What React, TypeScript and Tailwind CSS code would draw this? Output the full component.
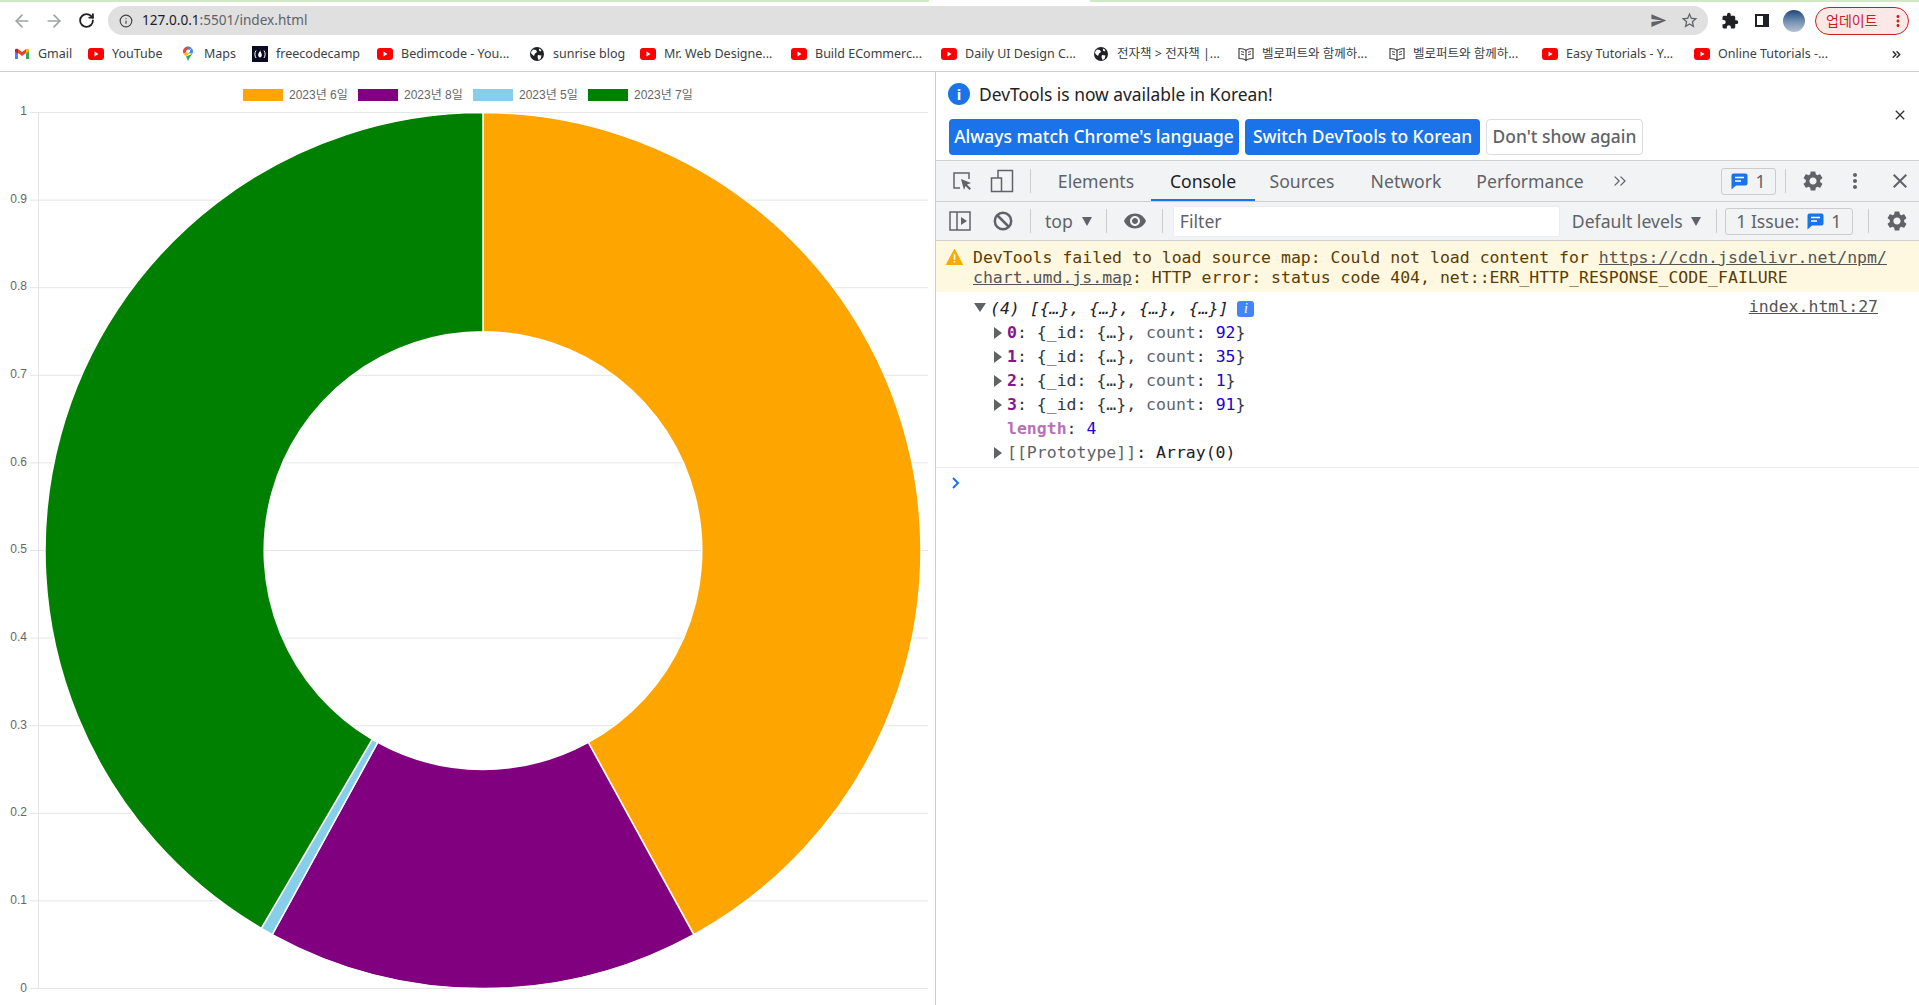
import React from "react";
import { ArrowLeft, ArrowRight, RotateCw, Info, ChevronsRight } from "lucide-react";
import { MdExtension, MdSend, MdStarBorder, MdSettings, MdMoreVert, MdClose, MdRemoveRedEye } from "react-icons/md";

const slices = [
  { count: 92, color: "#ffa500" },
  { count: 35, color: "#800080" },
  { count: 1, color: "#87ceeb" },
  { count: 91, color: "#008000" },
];

const legend = [
  { x: 243, color: "#ffa500", label: "2023년 6일" },
  { x: 358, color: "#800080", label: "2023년 8일" },
  { x: 473, color: "#87ceeb", label: "2023년 5일" },
  { x: 588, color: "#008000", label: "2023년 7일" },
];

const ticks = ["1", "0.9", "0.8", "0.7", "0.6", "0.5", "0.4", "0.3", "0.2", "0.1", "0"];

function slicePath(a0: number, a1: number) {
  const cx = 483;
  const cy = 478.6;
  const R = 438;
  const r = 218.8;
  const p = (rad: number, a: number) => `${cx + rad * Math.sin(a)} ${cy - rad * Math.cos(a)}`;
  const large = a1 - a0 > Math.PI ? 1 : 0;
  return `M${p(R, a0)} A${R} ${R} 0 ${large} 1 ${p(R, a1)} L${p(r, a1)} A${r} ${r} 0 ${large} 0 ${p(r, a0)} Z`;
}

function Chart() {
  const total = 219;
  let angle = 0;
  return (
    <svg width="935" height="933" className="block shrink-0 font-['Liberation_Sans','Noto_Sans_CJK_KR',sans-serif]">
      {legend.map((l) => (
        <g key={l.label}>
          <rect x={l.x} y="17" width="40" height="12" fill={l.color} />
          <text x={l.x + 46} y="27" fontSize="12" fill="#666">{l.label}</text>
        </g>
      ))}
      {ticks.map((t, i) => (
        <g key={t}>
          <line x1="30" x2="928" y1={40.5 + i * 87.6} y2={40.5 + i * 87.6} stroke="#e5e5e5" />
          <text x="27" y={43 + i * 87.65} fontSize="12" fill="#666" textAnchor="end">{t}</text>
        </g>
      ))}
      <line x1="38.5" x2="38.5" y1="40" y2="917" stroke="#e5e5e5" />
      {slices.map((s) => {
        const a0 = angle;
        angle += (s.count / total) * Math.PI * 2;
        return <path key={s.color} d={slicePath(a0, angle)} fill={s.color} stroke="#fff" strokeWidth="1.5" />;
      })}
    </svg>
  );
}

function YouTubeIcon() {
  return (
    <svg width="16" height="16" viewBox="0 0 16 16" className="shrink-0">
      <rect y="2" width="16" height="12" rx="3" fill="#f00" />
      <path d="M6.5 5.5v5l4-2.500z" fill="#fff" />
    </svg>
  );
}

function GmailIcon() {
  return (
    <svg width="16" height="16" viewBox="0 0 16 16" className="shrink-0">
      <path d="M1 4v9h3V7z" fill="#4285f4" />
      <path d="M15 4v9h-3V7z" fill="#34a853" />
      <path d="M12 3v4.500l3-2.200V4c0-1.200-1.500-1.800-3-1z" fill="#fbbc04" />
      <path d="M4 3v4l4 3 4-3V3L8 6z" fill="#ea4335" />
      <path d="M1 4v1.500l3 2.200V3C2.500 2.200 1 2.800 1 4z" fill="#c5221f" />
    </svg>
  );
}

function MapsIcon() {
  return (
    <svg width="16" height="16" viewBox="0 0 16 16" className="shrink-0">
      <path d="M8 0.500C5.200 0.500 3 2.700 3 5.300c0 1 .3 1.800.8 2.600L8 4.500z" fill="#ea4335" />
      <path d="M8 0.500c1.500 0 2.900.7 3.800 1.700L8 5z" fill="#4285f4" />
      <path d="M11.800 2.200C12.600 3 13 4.100 13 5.300c0 .9-.3 1.700-.7 2.400L8 7z" fill="#4285f4" />
      <path d="M3.800 7.900L8 4.500l1.500 2.800L6 10.500z" fill="#fbbc04" />
      <path d="M6 10.500L12.300 7.700C11 10 8.800 12 8 15.500 7.600 13.500 6.800 12 6 10.500z" fill="#34a853" />
      <circle cx="8" cy="5.300" r="1.800" fill="#fff" />
    </svg>
  );
}

function FreeCodeCampIcon() {
  return (
    <svg width="16" height="16" viewBox="0 0 16 16" className="shrink-0">
      <rect width="16" height="16" fill="#0a0a23" />
      <path d="M4 4.500C2.500 7 2.500 9.500 4 12M12 4.500c1.500 2.500 1.500 5 0 7.500" stroke="#fff" strokeWidth="1" fill="none" />
      <path d="M8 3.500c.8 2-1.800 3-1.800 5.500 0 1.500 1 2.500 1.800 2.500s1.800-1 1.800-2.500C9.800 7.500 8.500 6 8 3.500z" fill="#fff" />
    </svg>
  );
}

function GlobeIcon() {
  return (
    <svg width="16" height="16" viewBox="0 0 16 16" className="shrink-0">
      <circle cx="8" cy="8" r="7" fill="#202124" />
      <path d="M4 3.500l3 .5 1 2-2 1.500-1 2.500-2.500-2L2 6zM10 2.500l2.500 1.500-1 1.500-1.500-1zM9 9l3.500.5-1 3.500-2 1-1-3z" fill="#fff" />
    </svg>
  );
}

function BookIcon() {
  return (
    <svg width="16" height="16" viewBox="0 0 16 16" fill="none" stroke="#444" strokeWidth="1.200" className="shrink-0">
      <path d="M8 4.500C6.500 3 3.500 2.500 1 2.500v10c2.500 0 5.500.5 7 2 1.500-1.500 4.500-2 7-2v-10c-2.500 0-5.500.5-7 2zM8 4.500v10" />
      <path d="M3 5.500l3 .8M3 8l3 .8M10 6.300l3-.8M10 8.800l3-.8" strokeWidth="1" />
    </svg>
  );
}

const bookmarks = [
  { icon: <GmailIcon />, label: "Gmail", w: "w-[34px]" },
  { icon: <YouTubeIcon />, label: "YouTube", w: "w-[52px]" },
  { icon: <MapsIcon />, label: "Maps", w: "w-[32px]" },
  { icon: <FreeCodeCampIcon />, label: "freecodecamp", w: "w-[85px]" },
  { icon: <YouTubeIcon />, label: "Bedimcode - You...", w: "w-[112px]" },
  { icon: <GlobeIcon />, label: "sunrise blog", w: "w-[71px]" },
  { icon: <YouTubeIcon />, label: "Mr. Web Designe...", w: "w-[111px]" },
  { icon: <YouTubeIcon />, label: "Build ECommerc...", w: "w-[110px]" },
  { icon: <YouTubeIcon />, label: "Daily UI Design C...", w: "w-[112px]" },
  { icon: <GlobeIcon />, label: "전자책 > 전자책 |...", w: "w-[105px]" },
  { icon: <BookIcon />, label: "벨로퍼트와 함께하...", w: "w-[111px]" },
  { icon: <BookIcon />, label: "벨로퍼트와 함께하...", w: "w-[113px]" },
  { icon: <YouTubeIcon />, label: "Easy Tutorials - Y...", w: "w-[112px]" },
  { icon: <YouTubeIcon />, label: "Online Tutorials -...", w: "w-[113px]" },
];

function BrowserChrome() {
  return (
    <div className="shrink-0 border-b border-[#cfcfcf]">
      <div className="flex h-[2px]">
        <div className="w-[929px] bg-[#cfe9c5]" />
        <div className="w-[161px]" />
        <div className="flex-1 bg-[#cfe9c5]" />
      </div>
      <div className="flex h-[37px] items-center">
        <ArrowLeft size={20} className="ml-[12px] text-[#a0a3a6]" />
        <ArrowRight size={20} className="ml-[12px] text-[#a0a3a6]" />
        <RotateCw size={17} strokeWidth={2.6} className="ml-[14px] text-[#202124]" />
        <div className="ml-[13px] flex h-[29px] w-[1600px] items-center rounded-full bg-[#e0e0e0]">
          <Info size={14} className="ml-[11px] text-[#444]" />
          <span className="ml-[9px] text-[13.600px] text-[#5f6368]"><span className="text-[#202124]">127.0.0.1</span>:5501/index.html</span>
          <MdSend size={17} className="ml-auto text-[#5f6368]" />
          <MdStarBorder size={19} className="ml-[13px] mr-[9px] text-[#5f6368]" />
        </div>
        <MdExtension size={18} className="ml-[13px] text-[#202124]" />
        <div className="ml-[16px] h-[13px] w-[14px] border-2 border-r-[6px] border-[#202124]" />
        <div className="ml-[14px] h-[22px] w-[22px] rounded-full bg-gradient-to-b from-[#1f4679] via-[#6f8fb0] to-[#b6c3cf]" />
        <div className="ml-[10px] flex h-[28px] w-[94px] items-center rounded-full border border-[#c5221f] bg-[#fce8e6] pl-[10px] text-[14px] text-[#c5221f]">
          업데이트
          <MdMoreVert size={18} className="ml-auto mr-[1px] text-[#c5221f]" />
        </div>
      </div>
      <div className="flex h-[32px] items-center pb-[2px] pl-[14px] text-[12.500px] text-[#3c4043]">
        {bookmarks.map((b, i) => (
          <div key={i} className="mr-[16px] flex items-center">
            {b.icon}
            <span className={`ml-[8px] whitespace-nowrap ${b.w}`}>{b.label}</span>
          </div>
        ))}
        <ChevronsRight size={13} strokeWidth={3} className="ml-auto mr-[16px] text-[#333]" />
      </div>
    </div>
  );
}

function InspectIcon() {
  return (
    <svg width="20" height="20" viewBox="0 0 20 20" fill="none" className="shrink-0">
      <path d="M8 17H2V2h15v6" stroke="#5f6368" strokeWidth="1.500" />
      <path d="M9 8l10 4-4 1.500 4 4-1.500 1.500-4-4L12 19z" fill="#5f6368" />
    </svg>
  );
}

function DeviceIcon() {
  return (
    <svg width="24" height="24" viewBox="0 0 24 24" fill="none" stroke="#5f6368" strokeWidth="1.500" className="shrink-0">
      <path d="M8 9V1.500h14.500v21H12" />
      <rect x="1.500" y="9" width="10" height="13.500" />
    </svg>
  );
}

function SidebarIcon() {
  return (
    <svg width="22" height="20" viewBox="0 0 22 20" fill="none" className="shrink-0">
      <rect x="1" y="1" width="20" height="18" stroke="#5f6368" strokeWidth="1.500" />
      <path d="M8 1v18" stroke="#5f6368" strokeWidth="1.500" />
      <path d="M12 6l6 4-6 4z" fill="#5f6368" />
    </svg>
  );
}

function BlockIcon() {
  return (
    <svg width="20" height="20" viewBox="0 0 20 20" fill="none" stroke="#5f6368" strokeWidth="2.500" className="shrink-0">
      <circle cx="10" cy="10" r="8.200" />
      <path d="M4.500 4.500l11 11" />
    </svg>
  );
}

function ChatIcon() {
  return (
    <svg width="17" height="17" viewBox="0 0 17 17" className="shrink-0">
      <path d="M2.500 0.500h12a2 2 0 012 2v8a2 2 0 01-2 2H5L0.500 16.500V2.500a2 2 0 012-2z" fill="#1a73e8" />
      <path d="M4 4.500h9M4 8h6" stroke="#fff" strokeWidth="1.500" />
    </svg>
  );
}

function Sep({ className }: { className: string }) {
  return <div className={`h-[24px] w-px shrink-0 bg-[#ccc] ${className}`} />;
}

function DownArrow({ className }: { className: string }) {
  return <span className={`h-0 w-0 shrink-0 border-x-[5px] border-t-[9px] border-x-transparent border-t-[#5f6368] ${className}`} />;
}

const tabs = [
  { label: "Elements", w: "w-[110px]" },
  { label: "Console", w: "w-[104px]" },
  { label: "Sources", w: "w-[94px]" },
  { label: "Network", w: "w-[114px]" },
  { label: "Performance", w: "w-[134px]" },
];

function Triangle({ className }: { className: string }) {
  return <span className={`absolute h-0 w-0 border-y-[6px] border-l-[8px] border-y-transparent border-l-[#5f6368] ${className}`} />;
}

const rows = [
  { index: "0", count: "92" },
  { index: "1", count: "35" },
  { index: "2", count: "1" },
  { index: "3", count: "91" },
];

function DevTools() {
  return (
    <div className="flex min-w-0 flex-1 flex-col border-l border-[#cfcfcf] font-['Noto_Sans',sans-serif]">
      {/* language infobar */}
      <div className="relative h-[88px] shrink-0">
        <div className="flex h-[46px] items-center pb-[2px] pl-[12px]">
          <div className="flex h-[22px] w-[22px] items-center justify-center rounded-full bg-[#1a73e8] text-[15px] font-bold leading-none text-white">i</div>
          <span className="ml-[9px] text-[17.400px] text-[#202124]">DevTools is now available in Korean!</span>
        </div>
        <div className="mt-[1px] flex gap-[6px] pl-[13px] text-[17.400px] font-medium">
          <div className="flex h-[36px] w-[290px] items-center justify-center rounded-[4px] bg-[#1a73e8] pb-[2px] text-white">Always match Chrome's language</div>
          <div className="flex h-[36px] w-[235px] items-center justify-center rounded-[4px] bg-[#1a73e8] pb-[2px] text-white">Switch DevTools to Korean</div>
          <div className="flex h-[36px] w-[157px] items-center justify-center rounded-[4px] border border-[#dadce0] pb-[2px] text-[#5f6368]">Don't show again</div>
        </div>
        <MdClose size={16} className="absolute right-[11px] top-[35px] text-[#333]" />
      </div>

      {/* tab bar */}
      <div className="flex h-[42px] shrink-0 items-center border-y border-[#cfcfcf] bg-[#f1f3f4] pl-[16px] text-[17.600px] text-[#5f6368]">
        <InspectIcon />
        <div className="ml-[18px]"><DeviceIcon /></div>
        <Sep className="ml-[16px]" />
        <div className="ml-[10px] flex h-full">
          {tabs.map((t) => (
            <div
              key={t.label}
              className={`flex items-center justify-center ${t.w} ${t.label === "Console" ? "border-b-2 border-[#1a73e8] pt-[2px] text-[#202124]" : ""}`}
            >
              {t.label}
            </div>
          ))}
        </div>
        <ChevronsRight size={20} strokeWidth={1.5} className="ml-[13px]" />
        <div className="ml-[91px] flex h-[27px] w-[55px] items-center justify-center gap-[7px] rounded-[3px] border border-[#ccc] text-[#5f6368]">
          <ChatIcon />1
        </div>
        <Sep className="ml-[9px]" />
        <MdSettings size={24} className="ml-[15px]" />
        <MdMoreVert size={24} className="ml-[18px]" />
        <MdClose size={24} className="ml-[21px]" />
      </div>

      {/* console toolbar */}
      <div className="flex h-[39px] shrink-0 items-center border-b border-[#cfcfcf] bg-[#f1f3f4] pl-[13px] text-[17.600px] text-[#5f6368]">
        <SidebarIcon />
        <div className="ml-[22px]"><BlockIcon /></div>
        <Sep className="ml-[17px]" />
        <span className="ml-[14px]">top</span>
        <DownArrow className="ml-[9px]" />
        <Sep className="ml-[14px]" />
        <MdRemoveRedEye size={24} className="ml-[16px]" />
        <Sep className="ml-[15px]" />
        <div className="ml-[11px] flex h-[29px] w-[385px] items-center bg-white pl-[6px] shadow-[0_0_1px_#ccc]">Filter</div>
        <span className="ml-[13px]">Default levels</span>
        <DownArrow className="ml-[8px]" />
        <Sep className="ml-[15px]" />
        <div className="ml-[8px] flex h-[27px] w-[128px] items-center justify-center gap-[8px] rounded-[3px] border border-[#ccc]">
          1 Issue:
          <span className="flex items-center gap-[7px]"><ChatIcon />1</span>
        </div>
        <Sep className="ml-[15px]" />
        <MdSettings size={24} className="ml-[16px]" />
      </div>

      {/* console output */}
      <div className="flex-1 font-['DejaVu_Sans_Mono',monospace] text-[16.500px] leading-[20px]">
        <div className="relative h-[51px] bg-[#fef8e1] pb-[4px] pl-[37px] pr-[20px] pt-[7px] text-[#5c3c00]">
          <svg width="17" height="16" viewBox="0 0 16 15" className="absolute left-[10px] top-[8px]">
            <path d="M8 0.500L15.500 14.500H0.500z" fill="#f9ab00" stroke="#f9ab00" strokeLinejoin="round" />
            <path d="M8 5v5M8 11.200v1.500" stroke="#fff" strokeWidth="1.500" />
          </svg>
          <div className="whitespace-nowrap">DevTools failed to load source map: Could not load content for <span className="underline text-[#555]">https://cdn.jsdelivr.net/npm/</span></div>
          <div className="whitespace-nowrap"><span className="underline text-[#555]">chart.umd.js.map</span>: HTTP error: status code 404, net::ERR_HTTP_RESPONSE_CODE_FAILURE</div>
        </div>

        <div className="relative h-[27px] pl-[54px] pt-[7px] italic text-[#202124]">
          <span className="absolute left-[38px] top-[11px] h-0 w-0 border-x-[6px] border-t-[9px] border-x-transparent border-t-[#5f6368]" />
          (4) [{"{…}"}, {"{…}"}, {"{…}"}, {"{…}"}]
          <span className="ml-[9px] inline-flex h-[16px] w-[17px] items-center justify-center rounded-[3px] bg-[#4285f4] align-[1px] font-['Liberation_Serif',serif] text-[14px] text-white">i</span>
          <span className="absolute right-[41px] top-[5px] not-italic text-[#545454] underline">index.html:27</span>
        </div>
        {rows.map((r) => (
          <div key={r.index} className="relative mt-[4px] h-[20px] pl-[71px] text-[#303942]">
            <Triangle className="left-[58px] top-[4px]" />
            <span className="font-bold text-[#881391]">{r.index}</span>: {"{"}_id: {"{…}"}, <span className="text-[#5f6368]">count</span>: <span className="text-[#1c00cf]">{r.count}</span>{"}"}
          </div>
        ))}
        <div className="mt-[4px] h-[20px] pl-[71px] text-[#303942]">
          <span className="font-bold text-[#b871b8]">length</span>: <span className="text-[#1c00cf]">4</span>
        </div>
        <div className="relative mt-[4px] h-[24px] pl-[71px] text-[#202124]">
          <Triangle className="left-[58px] top-[4px]" />
          <span className="text-[#5f6368]">[[Prototype]]</span>: Array(0)
        </div>
        <div className="border-t border-[#ececec] pl-[15px] pt-[9px]">
          <svg width="10" height="12" viewBox="0 0 10 12" fill="none" stroke="#1a73e8" strokeWidth="2">
            <path d="M2 1l5 5-5 5" />
          </svg>
        </div>
      </div>
    </div>
  );
}

export default function App() {
  return (
    <div className="flex h-[1005px] w-[1919px] flex-col overflow-hidden bg-white font-['Noto_Sans','Noto_Sans_CJK_KR',sans-serif]">
      <BrowserChrome />
      <div className="flex min-h-0 flex-1">
        <div className="w-[935px] shrink-0 overflow-hidden">
          <Chart />
        </div>
        <DevTools />
      </div>
    </div>
  );
}
